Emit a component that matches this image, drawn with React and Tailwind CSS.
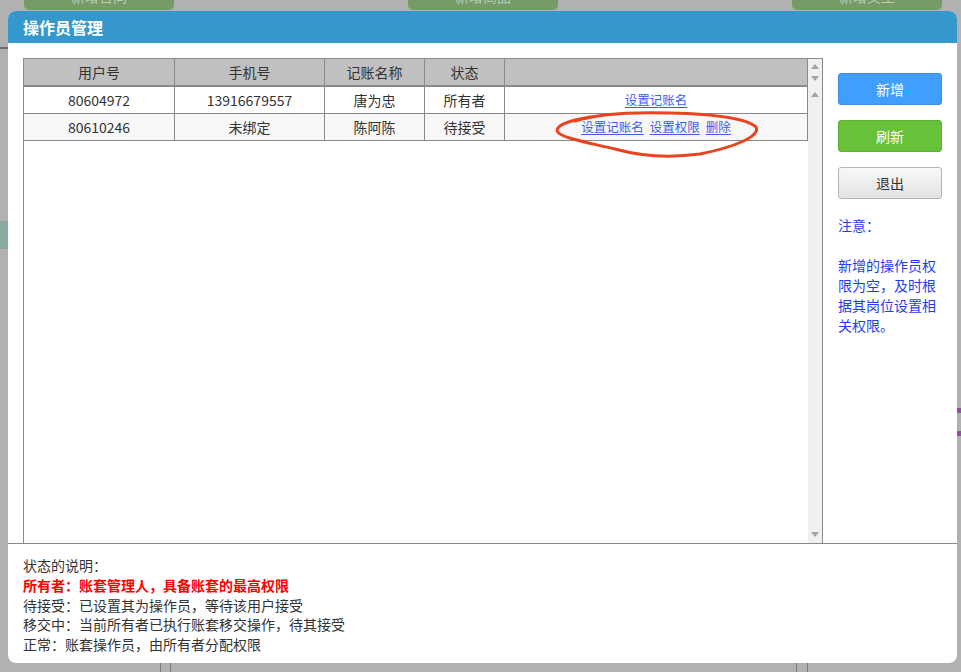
import { useState } from 'react'

const font = { fontFamily: '"Noto Sans CJK SC", "Noto Sans", sans-serif' }

const rows = [
  { id: '80604972', phone: '13916679557', name: '唐为忠', status: '所有者', links: ['设置记账名'] },
  { id: '80610246', phone: '未绑定', name: '陈阿陈', status: '待接受', links: ['设置记账名', '设置权限', '删除'] },
]

function Up({ className = '' }) {
  return (
    <svg width="8" height="5" viewBox="0 0 8 5" className={className}>
      <path d="M0 5 L4 0 L8 5 Z" fill="#a3a3a3" />
    </svg>
  )
}

function Down({ className = '' }) {
  return (
    <svg width="8" height="5" viewBox="0 0 8 5" className={className}>
      <path d="M0 0 L8 0 L4 5 Z" fill="#a3a3a3" />
    </svg>
  )
}

function BackdropButton({ label }) {
  return (
    <div className="w-[150px] h-[10px] rounded-b-[5px] bg-[#779b66] overflow-hidden flex justify-center">
      <span className="text-[14px] leading-[14px] -mt-[11px] text-[#b9cdb0]">{label}</span>
    </div>
  )
}

export default function App() {
  const [rowsState] = useState(rows)

  return (
    <div className="relative w-[961px] h-[672px] bg-[#b1b1b1] overflow-hidden" style={font}>
      {/* page behind the modal */}
      <div className="flex pl-[24px] gap-[234px]">
        <BackdropButton label="新增合同" />
        <BackdropButton label="新增商品" />
        <BackdropButton label="新增类型" />
      </div>
      <div className="absolute left-0 top-[47px] w-[8px] h-[2px] bg-[#6d6d6d]" />
      <div className="absolute left-0 top-[221px] w-[8px] h-[28px] bg-[#88aaa1]" />
      <div className="absolute right-0 top-[408px] w-[4px] h-[5px] bg-[#8e50a0]" />
      <div className="absolute right-0 top-[431px] w-[4px] h-[5px] bg-[#8e50a0]" />
      <div className="absolute left-[160px] top-[663px] w-[1px] h-[9px] bg-[#7a7a7a]" />
      <div className="absolute left-[170px] top-[663px] w-[1px] h-[9px] bg-[#7a7a7a]" />
      <div className="absolute left-[796px] top-[663px] w-[1px] h-[9px] bg-[#7a7a7a]" />
      <div className="absolute left-[807px] top-[663px] w-[1px] h-[9px] bg-[#7a7a7a]" />

      {/* modal */}
      <div className="absolute left-[8px] top-[11px] w-[949px] h-[652px] bg-white rounded-[8px] overflow-hidden flex flex-col">
        <div className="h-[32px] bg-[#3498cc] flex items-center px-[15px]">
          <span className="text-white text-[16px] font-bold">操作员管理</span>
        </div>

        <div className="h-[501px] flex pt-[15px] px-[15px] border-b border-[#8a8a8a]">
          {/* grid */}
          <div className="w-[800px] h-[485px] border-l border-t border-r border-[#8a8a8a] flex">
            <div className="w-[784px] text-[14px] text-[#333]">
              <div className="flex h-[28px] bg-[#c0c0c0] border-b-2 border-[#8a8a8a]">
                <div className="w-[151px] border-r border-[#8a8a8a] flex items-center justify-center">用户号</div>
                <div className="w-[150px] border-r border-[#8a8a8a] flex items-center justify-center">手机号</div>
                <div className="w-[100px] border-r border-[#8a8a8a] flex items-center justify-center">记账名称</div>
                <div className="w-[80px] border-r border-[#8a8a8a] flex items-center justify-center">状态</div>
                <div className="w-[303px] border-r border-[#8a8a8a]" />
              </div>
              {rowsState.map((r, i) => (
                <div
                  key={r.id}
                  className={`flex h-[27px] border-b border-[#8a8a8a] ${i % 2 ? 'bg-[#f7f7f7]' : 'bg-white'}`}
                >
                  <div className="w-[151px] border-r border-[#8a8a8a] flex items-center justify-center">{r.id}</div>
                  <div className="w-[150px] border-r border-[#8a8a8a] flex items-center justify-center">{r.phone}</div>
                  <div className="w-[100px] border-r border-[#8a8a8a] flex items-center justify-center">{r.name}</div>
                  <div className="w-[80px] border-r border-[#8a8a8a] flex items-center justify-center">{r.status}</div>
                  <div className="w-[303px] border-r border-[#8a8a8a] flex items-center justify-center gap-[6px] text-[12.5px]">
                    {r.links.map((l) => (
                      <a key={l} className="text-[#3a5cf0] underline underline-offset-2 cursor-pointer">{l}</a>
                    ))}
                  </div>
                </div>
              ))}
            </div>
            {/* scrollbar */}
            <div className="w-[14px] bg-[#f0f0f0] flex flex-col items-center">
              <Up className="mt-[5px]" />
              <Down className="mt-[7px]" />
              <Up className="mt-[11px]" />
              <div className="flex-1" />
              <Down className="mb-[6px]" />
            </div>
          </div>

          {/* side panel */}
          <div className="ml-[15px] w-[104px] pt-[15px] flex flex-col text-[14px]">
            <button className="h-[32px] rounded-[3px] bg-[#409eff] border border-[#3b8fe6] text-white">新增</button>
            <button className="mt-[15px] h-[32px] rounded-[3px] bg-[#67c23a] border border-[#5cb033] text-white">刷新</button>
            <button className="mt-[15px] h-[32px] rounded-[3px] bg-gradient-to-b from-[#f8f8f8] to-[#e2e2e2] border border-[#b5b5b5] text-[#333]">退出</button>
            <div className="mt-[16px] text-[#1f3df5] leading-[20px]">
              <p>注意：</p>
              <p className="mt-[20px]">新增的操作员权限为空，及时根据其岗位设置相关权限。</p>
            </div>
          </div>
        </div>

        <div className="px-[15px] pt-[12px] text-[14px] leading-[19.8px] text-[#333]">
          <p>状态的说明：</p>
          <p className="text-[#ff0000] font-bold">所有者：账套管理人，具备账套的最高权限</p>
          <p>待接受：已设置其为操作员，等待该用户接受</p>
          <p>移交中：当前所有者已执行账套移交操作，待其接受</p>
          <p>正常：账套操作员，由所有者分配权限</p>
        </div>
      </div>

      {/* red hand-drawn annotation */}
      <svg className="absolute left-0 top-0 pointer-events-none" width="961" height="672">
        <path
          d="M575 121 C 600 113, 640 112, 670 113 C 710 114, 745 117, 756 127 C 761 136, 735 147, 700 154 C 670 158, 640 156, 615 149 C 590 143, 560 138, 557 131 C 556 124, 575 119, 598 116"
          fill="none"
          stroke="#e9441f"
          strokeWidth="3"
          strokeLinecap="round"
        />
      </svg>
    </div>
  )
}
